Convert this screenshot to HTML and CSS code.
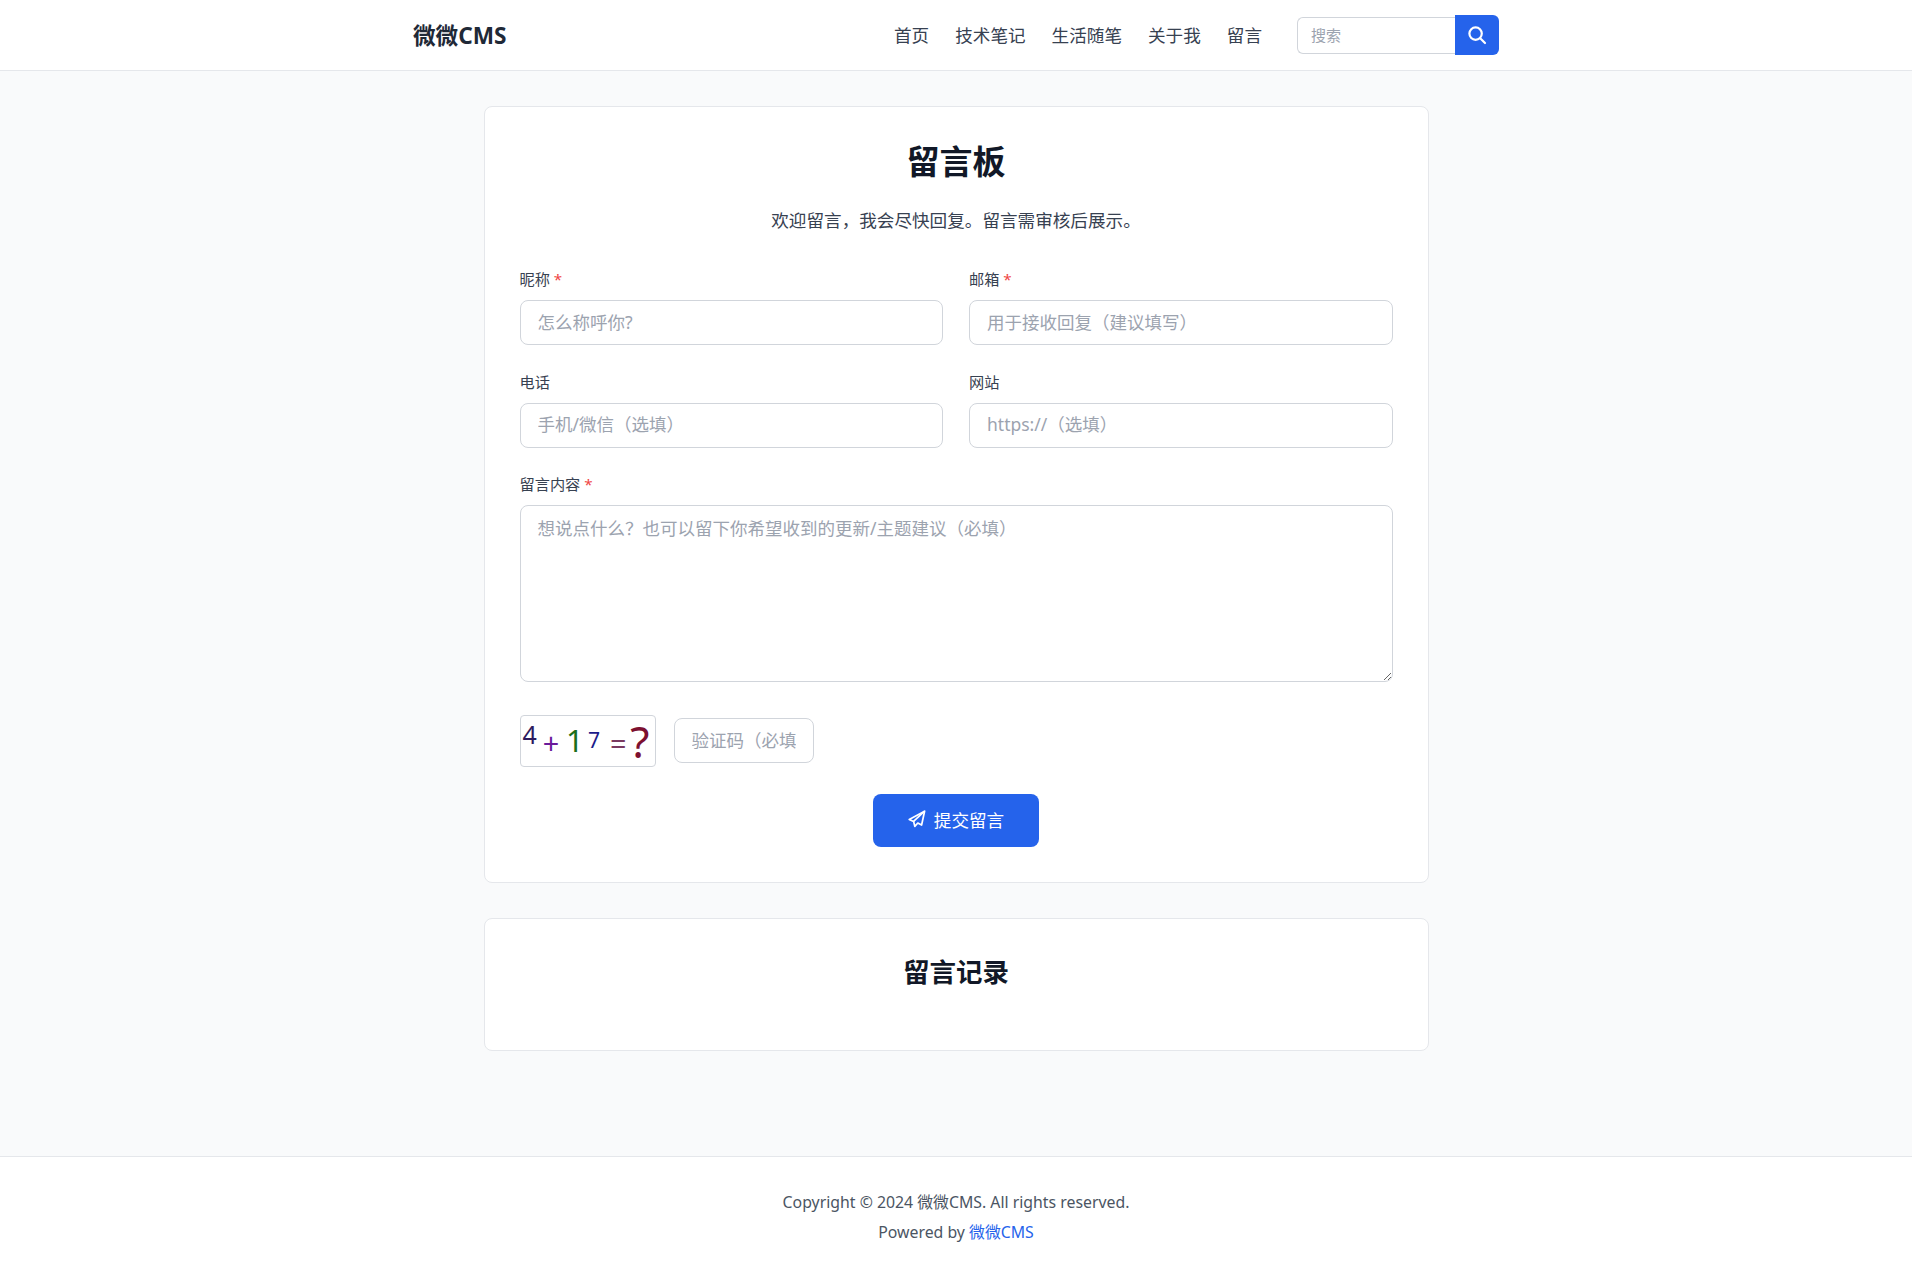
FILE: index.html
```html
<!DOCTYPE html>
<html lang="zh">
<head>
  <meta charset="UTF-8">
  <meta name="viewport" content="width=device-width, initial-scale=1.0">
  <title>留言板 - 微微CMS</title>
  <link rel="stylesheet" href="styles.css">
</head>
<body>
  <header class="site-header">
    <div class="header-inner">
      <a class="logo" href="#">微微CMS</a>
      <nav class="nav">
        <a href="#">首页</a>
        <a href="#">技术笔记</a>
        <a href="#">生活随笔</a>
        <a href="#">关于我</a>
        <a href="#">留言</a>
      </nav>
      <form class="search">
        <input type="text" placeholder="搜索">
        <button type="button" class="search-button" aria-label="搜索">
          <svg width="20" height="20" viewBox="0 0 20 20" fill="none" stroke="#fff" stroke-width="2.2" stroke-linecap="round">
            <circle cx="8.6" cy="8.6" r="6.2"/>
            <path d="M13.2 13.2 L18 18"/>
          </svg>
        </button>
      </form>
    </div>
  </header>

  <main class="main">
    <section class="card">
      <h1>留言板</h1>
      <p class="intro">欢迎留言，我会尽快回复。留言需审核后展示。</p>

      <form class="message-form">
        <div class="form-row">
          <div class="field">
            <label>昵称 <span class="required">*</span></label>
            <input type="text" placeholder="怎么称呼你?">
          </div>
          <div class="field">
            <label>邮箱 <span class="required">*</span></label>
            <input type="text" placeholder="用于接收回复（建议填写）">
          </div>
        </div>
        <div class="form-row">
          <div class="field">
            <label>电话</label>
            <input type="text" placeholder="手机/微信（选填）">
          </div>
          <div class="field">
            <label>网站</label>
            <input type="text" placeholder="https://（选填）">
          </div>
        </div>
        <div class="field">
          <label>留言内容 <span class="required">*</span></label>
          <textarea placeholder="想说点什么？也可以留下你希望收到的更新/主题建议（必填）"></textarea>
        </div>

        <div class="captcha-row">
          <svg class="captcha" width="136" height="52" viewBox="0 0 136 52">
            <text x="0" y="29" font-size="26" fill="#2e1a5e">4</text>
            <text x="21" y="40" font-size="30" fill="#6a1b9a">+</text>
            <text x="45" y="37" font-size="32" fill="#1b6e1b">1</text>
            <text x="68" y="33" font-size="22" fill="#1c1c8a">7</text>
            <text x="91" y="40" font-size="30" fill="#7a3a60">=</text>
            <text x="112" y="44" font-size="46" fill="#7d1030">?</text>
          </svg>
          <input class="captcha-input" type="text" placeholder="验证码（必填）">
        </div>

        <div class="form-actions">
          <button type="button" class="submit-button">
            <svg width="18" height="18" viewBox="0 0 18 18" fill="none" stroke="#fff" stroke-width="1.7" stroke-linejoin="round">
              <path d="M16.6 1.2 L1.2 9.4 L5.6 11.4 L6.8 16.4 L9.8 13 L13.6 15 Z"/>
              <path d="M16.6 1.2 L5.6 11.4"/>
            </svg>
            提交留言
          </button>
        </div>
      </form>
    </section>

    <section class="card records">
      <h2>留言记录</h2>
    </section>
  </main>

  <footer class="site-footer">
    <p>Copyright © 2024 微微CMS. All rights reserved.</p>
    <p>Powered by <a href="#">微微CMS</a></p>
  </footer>
</body>
</html>
```

FILE: styles.css
```css
* {
  box-sizing: border-box;
}

body {
  margin: 0;
  padding: 0;
  min-height: 1279px;
  display: flex;
  flex-direction: column;
  font-family: "Noto Sans", "Noto Sans CJK SC", sans-serif;
  background-color: #f9fafb;
  color: #374151;
}

a {
  text-decoration: none;
  color: inherit;
}

.site-header {
  height: 71px;
  background-color: #fff;
  border-bottom: 1px solid #e5e7eb;
}

.header-inner {
  width: 1086px;
  height: 70px;
  margin: 0 auto;
  display: flex;
  align-items: center;
}

.logo {
  margin-right: auto;
  margin-bottom: 2px;
  font-size: 22.6px;
  font-weight: 700;
  color: #1f2937;
}

.nav {
  display: flex;
  gap: 26px;
  margin-bottom: 2px;
  font-size: 17.6px;
  color: #374151;
}

.search {
  display: flex;
  align-items: center;
  margin-left: 35px;
}

.search input {
  width: 158px;
  height: 37px;
  padding: 0 13px 1px;
  font-family: inherit;
  font-size: 15px;
  border: 1px solid #d1d5db;
  border-right: none;
  border-radius: 6px 0 0 6px;
  outline: none;
}

.search-button {
  width: 44px;
  height: 40px;
  display: flex;
  align-items: center;
  justify-content: center;
  padding: 0;
  background-color: #2563eb;
  border: none;
  border-radius: 0 6px 6px 0;
}

.main {
  flex: 1;
  width: 945px;
  margin: 35px auto 0;
}

.card {
  background-color: #fff;
  border: 1px solid #e5e7eb;
  border-radius: 8px;
  padding: 35px;
}

.records {
  margin-top: 35px;
  height: 133px;
}

h1 {
  margin: 0 0 24px;
  font-size: 33px;
  line-height: 40px;
  text-align: center;
  color: #111827;
}

h2 {
  margin: 0;
  font-size: 26.5px;
  line-height: 36px;
  text-align: center;
  color: #111827;
}

.intro {
  margin: 0 0 34px;
  font-size: 17.6px;
  line-height: 28px;
  text-align: center;
  color: #374151;
}

.form-row {
  display: grid;
  grid-template-columns: 1fr 1fr;
  gap: 26px;
}

.field {
  margin-bottom: 25.5px;
}

.field label {
  display: block;
  margin-bottom: 9px;
  font-size: 15.2px;
  line-height: 23px;
  color: #374151;
}

.required {
  color: #ef4444;
}

.field input,
.field textarea,
.captcha-input {
  display: block;
  width: 100%;
  height: 45px;
  padding: 0 17px 2px;
  font-family: inherit;
  font-size: 17.5px;
  background-color: #fff;
  border: 1px solid #d1d5db;
  border-radius: 8px;
  outline: none;
}

.field textarea {
  height: 177px;
  padding: 9px 17px;
  resize: vertical;
}

input::placeholder,
textarea::placeholder {
  color: #9ca3af;
}

.captcha-row {
  display: flex;
  align-items: center;
  gap: 18px;
  margin-top: 32.5px;
}

.captcha {
  flex: none;
  overflow: visible;
  border: 1px solid #d1d5db;
  border-radius: 4px;
  font-family: "Noto Sans", sans-serif;
}

.captcha-input {
  width: 140px;
}

.form-actions {
  display: flex;
  justify-content: center;
  margin-top: 27px;
}

.submit-button {
  width: 166px;
  height: 53px;
  display: flex;
  align-items: center;
  justify-content: center;
  gap: 8px;
  padding: 0 0 2px;
  font-family: inherit;
  font-size: 17.6px;
  color: #fff;
  background-color: #2563eb;
  border: none;
  border-radius: 8px;
}

.site-footer {
  height: 123px;
  padding-top: 33px;
  background-color: #fff;
  border-top: 1px solid #e5e7eb;
  text-align: center;
  font-size: 15.84px;
  color: #4b5563;
}

.site-footer p {
  margin: 0 0 6px;
  line-height: 24px;
}

.site-footer a {
  color: #2563eb;
}
```
